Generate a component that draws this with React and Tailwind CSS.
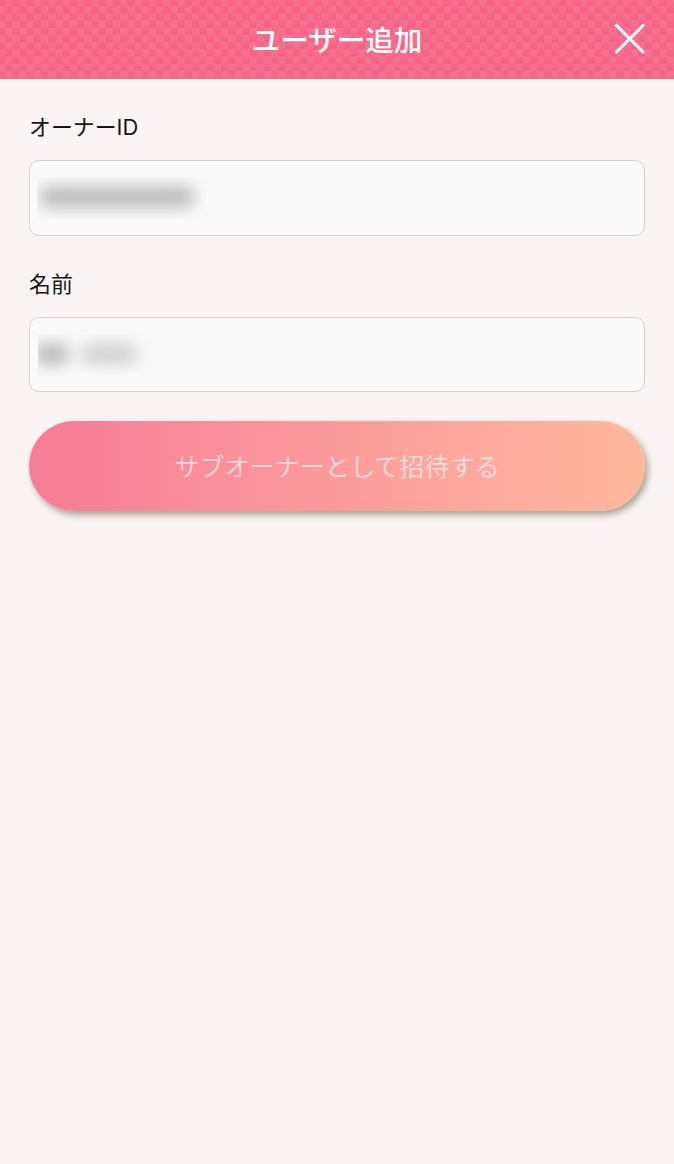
function HeaderTexture() {
  return (
    <svg className="absolute inset-0 h-full w-full" aria-hidden="true">
      <defs>
        <linearGradient id="light" x1="0" y1="0" x2="0" y2="1">
          <stop offset="0" stopColor="#f57392" />
          <stop offset="1" stopColor="#f66e8e" />
        </linearGradient>
        <linearGradient id="dark" x1="0" y1="0" x2="0" y2="1">
          <stop offset="0" stopColor="#f8688a" />
          <stop offset="1" stopColor="#f65f83" />
        </linearGradient>
        <pattern id="weave" x="5.2" y="-1" width="14.38" height="14.4" patternUnits="userSpaceOnUse">
          <rect width="7.19" height="7.2" fill="url(#light)" />
          <rect x="7.19" width="7.19" height="7.2" fill="url(#dark)" />
          <rect y="7.2" width="7.19" height="7.2" fill="url(#dark)" />
          <rect x="7.19" y="7.2" width="7.19" height="7.2" fill="url(#light)" />
        </pattern>
      </defs>
      <rect width="100%" height="100%" fill="url(#weave)" />
    </svg>
  );
}

function Field({ label, className, boxClassName, children }) {
  return (
    <div className={className}>
      <div className="h-[33px] text-[21.9px] leading-[33px] text-[#151515]">{label}</div>
      <div className={`mt-[16px] flex items-center rounded-[10px] border border-[#d2d0d0] bg-[#fafafa] pl-[7px] ${boxClassName}`}>
        {children}
      </div>
    </div>
  );
}

export default function App() {
  return (
    <div className="min-h-[1164px] w-full bg-[#f9f3f3] font-['Inter','Noto_Sans_CJK_JP',sans-serif]">
      <header className="relative flex h-[79px] items-center justify-center overflow-hidden bg-[#f86888]">
        <HeaderTexture />
        <h1 className="relative pt-[2px] text-[28.5px] leading-[40px] font-medium text-white">ユーザー追加</h1>
        <button className="absolute top-[22px] right-[27px]" aria-label="閉じる">
          <svg width="34" height="34" viewBox="0 0 34 34" fill="none" stroke="white" strokeWidth="3">
            <path d="M2.5 2.5 31 31M31 2.5 2.5 31" />
          </svg>
        </button>
      </header>
      <main className="px-[29px] pt-[32px]">
        <Field label="オーナーID" boxClassName="h-[76px]">
          <div className="h-[42px] w-[170px] overflow-hidden">
            <div className="mt-[9px] ml-[2px] h-[22px] w-[156px] rounded-full bg-[#bcbcbc] blur-[8px]" />
          </div>
        </Field>
        <Field label="名前" className="mt-[32px]" boxClassName="h-[75px]">
          <div className="ml-px flex h-[42px] w-[115px] overflow-hidden">
            <div className="mt-[9px] -ml-1 h-[22px] w-[36px] rounded-full bg-[#bcbcbc] blur-[8px]" />
            <div className="mt-[9px] ml-[11px] h-[22px] w-[57px] rounded-full bg-[#d2d2d2] blur-[8px]" />
          </div>
        </Field>
        <button className="mt-[29px] flex h-[90px] w-full items-center justify-center rounded-full bg-linear-to-r from-[#f77c98] to-[#ffb89e] pt-[3px] text-[25.1px] font-[350] text-white/65 shadow-[3px_4px_6px_#a8a798]">
          サブオーナーとして招待する
        </button>
      </main>
    </div>
  );
}
